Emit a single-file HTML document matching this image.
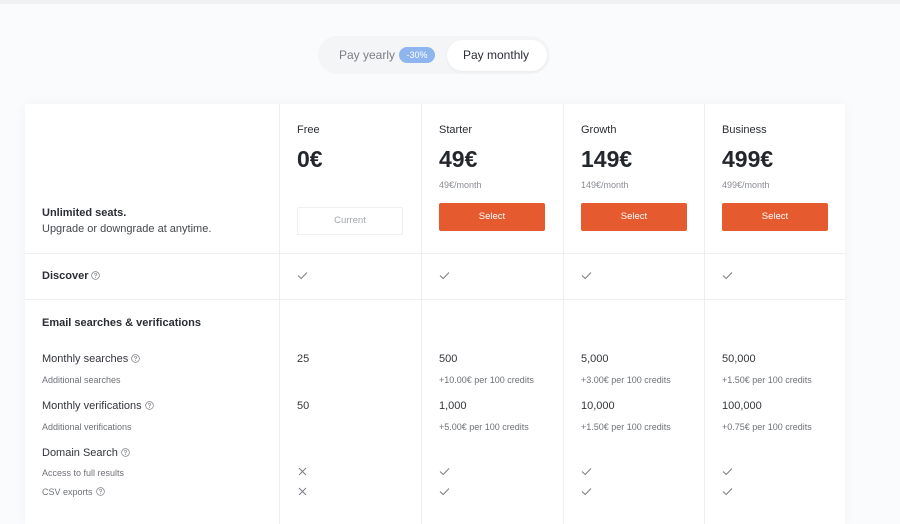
<!DOCTYPE html>
<html><head><meta charset="utf-8"><style>
*{margin:0;padding:0;box-sizing:border-box}
body{width:900px;height:512px;overflow:hidden;background:#fafbfc;font-family:"Liberation Sans",sans-serif;color:#2a2d33;position:relative}
.a{position:absolute;white-space:nowrap}
.top{position:absolute;left:0;top:0;width:900px;height:4px;background:#f0f1f2}
.toggle{position:absolute;left:318px;top:36px;width:232px;height:38px;border-radius:19px;background:#f4f5f7}
.pm{position:absolute;left:447px;top:40px;width:100px;height:31px;border-radius:16px;background:#fff;box-shadow:0 1px 3px rgba(0,0,0,.05)}
.badge{position:absolute;left:399px;top:47px;width:36px;height:16px;border-radius:8px;background:#8fb5ee;color:#fff;font-size:9px;text-align:center;line-height:16px}
.card{position:absolute;left:25px;top:104px;width:820px;height:420px;background:#fff;box-shadow:0 0 12px rgba(0,0,0,.04)}
.vl{position:absolute;top:104px;height:420px;width:1px;background:#eceef0}
.hl{position:absolute;left:25px;width:820px;height:1px;background:#eceef0}
.pn{font-size:11px;color:#2a2d33}
.pr{font-size:23px;font-weight:bold;color:#23262b}
.mo{font-size:9px;color:#8a8d93}
.btn{position:absolute;width:106px;height:28px;background:#e55a2f;border-radius:2px;color:#fff;font-size:9.5px;text-align:center;line-height:28px}
.cur{position:absolute;left:297px;top:207px;width:106px;height:28px;border:1px solid #eeeff1;border-radius:2px;color:#a4a7ad;font-size:9.5px;text-align:center;line-height:26px}
.l{font-size:11px;color:#33363c}
.s{font-size:9px;color:#6e7177}
.v{font-size:11px;color:#33363c}
.c{font-size:9px;color:#6e7177}
.ck{width:11px;height:11px}
.q{display:inline-block;width:9px;height:9px;vertical-align:-1px;margin-left:3px}
</style></head><body>
<svg width="0" height="0" style="position:absolute"><defs>
<symbol id="ok" viewBox="0 0 11 11"><path d="M1 5.5 L4.2 8.5 L10 2.5" fill="none" stroke="#7a7d83" stroke-width="1"/></symbol>
<symbol id="no" viewBox="0 0 11 11"><path d="M2 2 L9 9 M9 2 L2 9" fill="none" stroke="#7a7d83" stroke-width="1"/></symbol>
<symbol id="qm" viewBox="0 0 10 10"><circle cx="5" cy="5" r="4.3" fill="none" stroke="#7a7d83" stroke-width=".8"/><path d="M3.6 4 Q3.6 2.7 5 2.7 Q6.4 2.7 6.4 3.9 Q6.4 4.7 5 5.2 L5 6" fill="none" stroke="#7a7d83" stroke-width=".8"/><circle cx="5" cy="7.3" r=".5" fill="#7a7d83"/></symbol>
</defs></svg>
<div class="top"></div>
<div class="toggle"></div><div class="pm"></div>
<div class="a" style="left:339px;top:48px;font-size:12px;color:#7b7e84">Pay yearly</div>
<div class="badge">-30%</div>
<div class="a" style="left:463px;top:48px;font-size:12px;color:#2a2d33">Pay monthly</div>
<div class="card"></div>
<div class="vl" style="left:279px"></div><div class="vl" style="left:421px"></div><div class="vl" style="left:563px"></div><div class="vl" style="left:704px"></div>
<div class="hl" style="top:253px"></div><div class="hl" style="top:299px"></div>

<div class="a" style="left:42px;top:207px;font-size:11px;font-weight:bold">Unlimited seats.</div>
<div class="a" style="left:42px;top:223px;font-size:11px;color:#44474d">Upgrade or downgrade at anytime.</div>

<div class="a pn" style="left:297px;top:124px">Free</div>
<div class="a pr" style="left:297px;top:146px">0€</div>
<div class="cur">Current</div>

<div class="a pn" style="left:439px;top:124px">Starter</div>
<div class="a pr" style="left:439px;top:146px">49€</div>
<div class="a mo" style="left:439px;top:180px">49€/month</div>
<div class="btn" style="left:439px;top:203px">Select</div>

<div class="a pn" style="left:581px;top:124px">Growth</div>
<div class="a pr" style="left:581px;top:146px">149€</div>
<div class="a mo" style="left:581px;top:180px">149€/month</div>
<div class="btn" style="left:581px;top:203px">Select</div>

<div class="a pn" style="left:722px;top:124px">Business</div>
<div class="a pr" style="left:722px;top:146px">499€</div>
<div class="a mo" style="left:722px;top:180px">499€/month</div>
<div class="btn" style="left:722px;top:203px">Select</div>

<div class="a" style="left:42px;top:270px;font-size:11px;font-weight:bold">Discover<svg class="q"><use href="#qm"/></svg></div>
<svg class="a ck" style="left:297px;top:270px"><use href="#ok"/></svg><svg class="a ck" style="left:439px;top:270px"><use href="#ok"/></svg><svg class="a ck" style="left:581px;top:270px"><use href="#ok"/></svg><svg class="a ck" style="left:722px;top:270px"><use href="#ok"/></svg>

<div class="a" style="left:42px;top:317px;font-size:11px;font-weight:bold">Email searches &amp; verifications</div>

<div class="a l" style="left:42px;top:353px">Monthly searches<svg class="q"><use href="#qm"/></svg></div>
<div class="a s" style="left:42px;top:375px">Additional searches</div>
<div class="a v" style="left:297px;top:353px">25</div>
<div class="a v" style="left:439px;top:353px">500</div><div class="a c" style="left:439px;top:375px">+10.00€ per 100 credits</div>
<div class="a v" style="left:581px;top:353px">5,000</div><div class="a c" style="left:581px;top:375px">+3.00€ per 100 credits</div>
<div class="a v" style="left:722px;top:353px">50,000</div><div class="a c" style="left:722px;top:375px">+1.50€ per 100 credits</div>

<div class="a l" style="left:42px;top:400px">Monthly verifications<svg class="q"><use href="#qm"/></svg></div>
<div class="a s" style="left:42px;top:422px">Additional verifications</div>
<div class="a v" style="left:297px;top:400px">50</div>
<div class="a v" style="left:439px;top:400px">1,000</div><div class="a c" style="left:439px;top:422px">+5.00€ per 100 credits</div>
<div class="a v" style="left:581px;top:400px">10,000</div><div class="a c" style="left:581px;top:422px">+1.50€ per 100 credits</div>
<div class="a v" style="left:722px;top:400px">100,000</div><div class="a c" style="left:722px;top:422px">+0.75€ per 100 credits</div>

<div class="a l" style="left:42px;top:447px">Domain Search<svg class="q"><use href="#qm"/></svg></div>
<div class="a s" style="left:42px;top:468px">Access to full results</div>
<div class="a s" style="left:42px;top:487px">CSV exports<svg class="q"><use href="#qm"/></svg></div>
<svg class="a ck" style="left:297px;top:466px"><use href="#no"/></svg><svg class="a ck" style="left:297px;top:486px"><use href="#no"/></svg>
<svg class="a ck" style="left:439px;top:466px"><use href="#ok"/></svg><svg class="a ck" style="left:439px;top:486px"><use href="#ok"/></svg>
<svg class="a ck" style="left:581px;top:466px"><use href="#ok"/></svg><svg class="a ck" style="left:581px;top:486px"><use href="#ok"/></svg>
<svg class="a ck" style="left:722px;top:466px"><use href="#ok"/></svg><svg class="a ck" style="left:722px;top:486px"><use href="#ok"/></svg>
</body></html>
